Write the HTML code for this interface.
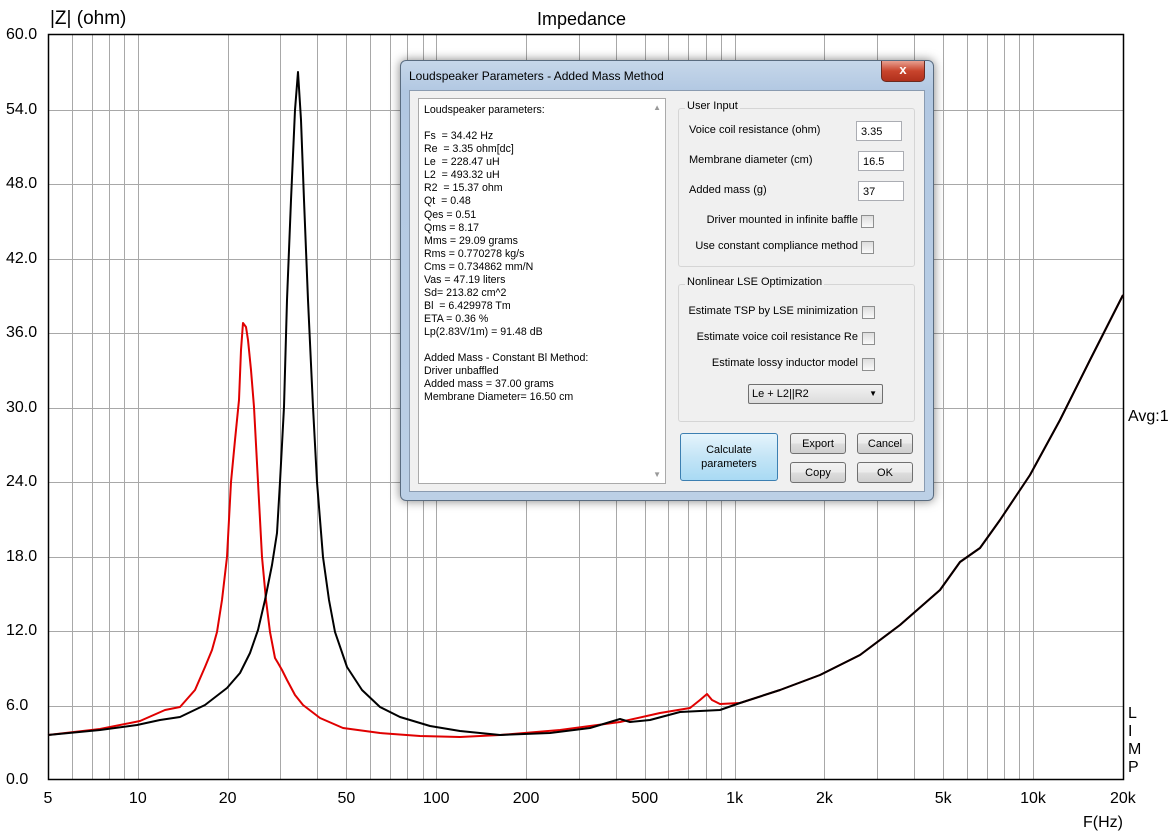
<!DOCTYPE html>
<html><head><meta charset="utf-8"><style>
body{margin:0;width:1173px;height:835px;overflow:hidden;background:#fff;font-family:"Liberation Sans",Arial,sans-serif;position:relative}
.t{position:absolute;font-size:16px;color:#000;white-space:nowrap}
.dlg{position:absolute;left:400px;top:60px;width:532px;height:439px;border:1px solid #5a6c80;border-radius:6px;background:linear-gradient(#c6d7ea,#b2c8e2 30px,#bcd0e6);box-shadow:0 0 10px rgba(0,0,0,.5)}
.dlg *{font-size:11px}
.title{position:absolute;left:8px;top:8px;font-size:12px!important;color:#000}
.close{position:absolute;left:480px;top:0;width:42px;height:20px;border:1px solid #6b2a20;border-top:none;border-radius:0 0 5px 5px;background:linear-gradient(#e8a090,#c8442c 50%,#b0301c);color:#fff;text-align:center;font-weight:bold;font-size:13px!important;line-height:18px}
.inner{position:absolute;left:8px;top:29px;width:514px;height:400px;background:#f0f0f0;border:1px solid #8a9bb0}
.list{position:absolute;left:8px;top:7px;width:246px;height:384px;background:#fff;border:1px solid #aaa}
.list pre{margin:0;position:absolute;left:5px;top:5px;font-family:"Liberation Sans",sans-serif;font-size:10.6px;line-height:13.07px}
.grp{position:absolute;border:1px solid #d5d5d5;border-radius:3px}
.gl{position:absolute;top:-9px;left:6px;background:#f0f0f0;padding:0 2px}
.lab{position:absolute;white-space:nowrap}
.rl{position:absolute;white-space:nowrap;right:56px}
.inp{position:absolute;width:46px;height:20px;background:#fff;border:1px solid #abadb3;padding-left:4px;line-height:20px;box-sizing:border-box}
.cb{position:absolute;width:11px;height:11px;border:1px solid #8e8f8f;background:linear-gradient(#ddd,#fafafa)}
.btn{position:absolute;width:56px;height:21px;border:1px solid #707070;border-radius:3px;background:linear-gradient(#f2f2f2,#ebebeb 50%,#dddddd 51%,#cfcfcf);text-align:center;line-height:20px;box-sizing:border-box}
</style></head><body>
<svg id="s" width="1173" height="835" style="position:absolute;left:0;top:0">
<g id="grid" stroke="#a8a8a8" stroke-width="1"></g>
<rect x="48.5" y="34.5" width="1075" height="745" fill="none" stroke="#000" stroke-width="1.5"/>
<polyline fill="none" stroke="#e00000" stroke-width="2" stroke-linejoin="round" points="48,735 100,729 140,721 165,710 180,707 195,690 205,667 212,650 217,632 222,600 227,557 231,482 235,440 239,400 241,350 243,323 246,327 248,340 251,370 254,407 258,482 262,557 266,600 270,632 275,658 278,663 282,670 287,680 295,695 303,705 320,718 343,728 380,733 420,736 460,737 500,735 560,730 620,722 660,713 690,708 700,700 707,694 712,700 720,704 740,703 780,690 820,675 860,655 900,625 940,590 960,562 980,548 1000,520 1030,475 1060,420 1090,360 1123,295"/>
<polyline fill="none" stroke="#000" stroke-width="2" stroke-linejoin="round" points="48,735 100,730 137,725 160,720 180,717 205,705 227,688 240,673 250,653 258,630 265,600 272,565 277,533 280,482 284,407 287,300 291,200 295,110 298,72 301,120 304,200 308,300 313,407 317,482 323,557 329,600 335,632 347,667 362,690 380,707 400,717 430,726 460,731 500,735 550,733 590,728 610,722 620,719 630,722 650,720 680,712 700,711 720,710 740,703 780,690 820,675 860,655 900,625 940,590 960,562 980,548 1000,520 1030,475 1060,420 1090,360 1123,295"/>
</svg>
<div class="t" style="left:50px;top:8px;font-size:19px">|Z| (ohm)</div>
<div class="t" style="left:537px;top:9px;font-size:18px">Impedance</div>
<div id="labs"></div>
<div class="t" style="left:1128px;top:408px">Avg:1</div>
<div class="t" style="left:1128px;top:705px;line-height:18px">L<br>I<br>M<br>P</div>
<div class="t" style="left:1083px;top:814px">F(Hz)</div>

<div class="dlg">
<div class="title">Loudspeaker Parameters - Added Mass Method</div>
<div class="close">x</div>
<div class="inner">
<div class="list"><pre>Loudspeaker parameters:

Fs  = 34.42 Hz
Re  = 3.35 ohm[dc]
Le  = 228.47 uH
L2  = 493.32 uH
R2  = 15.37 ohm
Qt  = 0.48
Qes = 0.51
Qms = 8.17
Mms = 29.09 grams
Rms = 0.770278 kg/s
Cms = 0.734862 mm/N
Vas = 47.19 liters
Sd= 213.82 cm^2
Bl  = 6.429978 Tm
ETA = 0.36 %
Lp(2.83V/1m) = 91.48 dB

Added Mass - Constant Bl Method:
Driver unbaffled
Added mass = 37.00 grams
Membrane Diameter= 16.50 cm</pre>
<div style="position:absolute;right:4px;top:4px;color:#999;font-size:8px">▲</div>
<div style="position:absolute;right:4px;bottom:4px;color:#999;font-size:8px">▼</div></div>
<div class="grp" style="left:268px;top:17px;width:235px;height:157px"><span class="gl">User Input</span>
<span class="lab" style="left:10px;top:15px">Voice coil resistance (ohm)</span><div class="inp" style="left:177px;top:12px">3.35</div>
<span class="lab" style="left:10px;top:45px">Membrane diameter (cm)</span><div class="inp" style="left:179px;top:42px">16.5</div>
<span class="lab" style="left:10px;top:75px">Added mass (g)</span><div class="inp" style="left:179px;top:72px">37</div>
<span class="rl" style="top:105px">Driver mounted in infinite baffle</span><div class="cb" style="left:182px;top:106px"></div>
<span class="rl" style="top:131px">Use constant compliance method</span><div class="cb" style="left:182px;top:132px"></div>
</div>
<div class="grp" style="left:268px;top:193px;width:235px;height:136px"><span class="gl">Nonlinear LSE Optimization</span>
<span class="rl" style="top:20px">Estimate TSP by LSE minimization</span><div class="cb" style="left:183px;top:21px"></div>
<span class="rl" style="top:46px">Estimate voice coil resistance Re</span><div class="cb" style="left:183px;top:47px"></div>
<span class="rl" style="top:72px">Estimate lossy inductor model</span><div class="cb" style="left:183px;top:73px"></div>
<div style="position:absolute;left:69px;top:99px;width:135px;height:20px;border:1px solid #707070;border-radius:2px;background:linear-gradient(#f2f2f2,#dcdcdc);line-height:18px;padding-left:3px;box-sizing:border-box">Le + L2||R2<span style="position:absolute;right:5px;font-size:8px">▼</span></div>
</div>
<div style="position:absolute;left:270px;top:342px;width:98px;height:48px;border:1px solid #3c7fb1;border-radius:3px;background:linear-gradient(#e5f4fc,#c4e5f6 50%,#a9daf4);text-align:center;line-height:14px;box-sizing:border-box;padding-top:9px">Calculate<br>parameters</div>
<div class="btn" style="left:380px;top:342px">Export</div>
<div class="btn" style="left:447px;top:342px">Cancel</div>
<div class="btn" style="left:380px;top:371px">Copy</div>
<div class="btn" style="left:447px;top:371px">OK</div>
</div>
</div>
<script>
var g=document.getElementById('grid'),ns='http://www.w3.org/2000/svg',labs=document.getElementById('labs');
function X(f){return 48+298.4*Math.log10(f/5);}
function line(x1,y1,x2,y2){var l=document.createElementNS(ns,'line');l.setAttribute('x1',x1);l.setAttribute('y1',y1);l.setAttribute('x2',x2);l.setAttribute('y2',y2);g.appendChild(l);}
var fs=[6,7,8,9];[10,100,1000,10000].forEach(function(d){for(var i=1;i<10;i++){var f=d*i;if(f<=20000)fs.push(f);}});
fs.forEach(function(f){var x=Math.round(X(f))+.5;line(x,34,x,780);});
for(var k=1;k<10;k++){var y=Math.round(780-k*6*745/60)+.5;line(48,y,1123,y);}
function lab(txt,x,y,c){var d=document.createElement('div');d.className='t';d.textContent=txt;d.style.top=y+'px';d.style.left=x+'px';if(c)d.style.transform='translateX(-50%)';labs.appendChild(d);}
for(var k=0;k<=10;k++){lab((k*6).toFixed(1),6,Math.round(780-k*74.5)-9,false);}
[[5,'5'],[10,'10'],[20,'20'],[50,'50'],[100,'100'],[200,'200'],[500,'500'],[1000,'1k'],[2000,'2k'],[5000,'5k'],[10000,'10k'],[20000,'20k']].forEach(function(p){lab(p[1],X(p[0]),790,true);});
</script>
</body></html>
